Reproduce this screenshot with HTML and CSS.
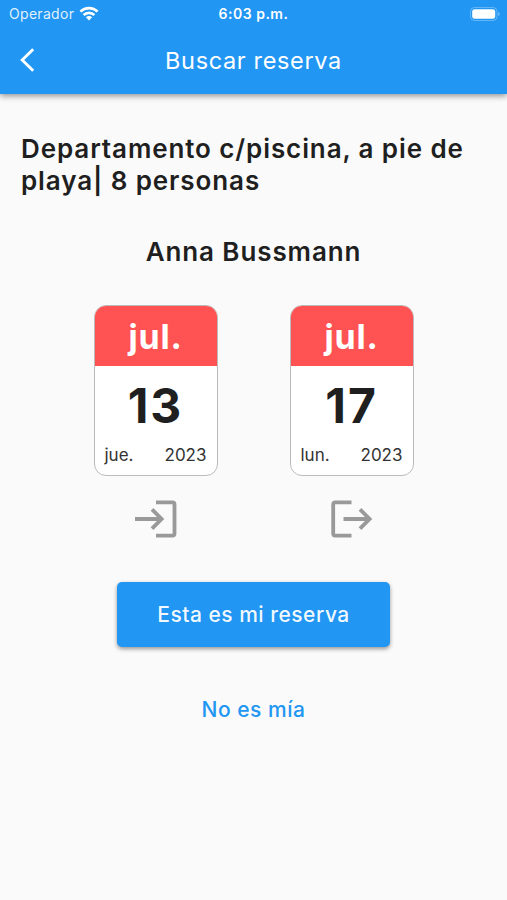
FILE: index.html
```html
<!DOCTYPE html>
<html lang="es">
<head>
  <meta charset="UTF-8" />
  <meta name="viewport" content="width=device-width, initial-scale=1.0" />
  <title>Buscar reserva</title>
  <link rel="stylesheet" href="styles.css">
</head>
<body>
  <header>
    <div class="status-bar">
      <div class="carrier">
        <span>Operador</span>
        <svg width="20" height="15" viewBox="0 0 20 15" fill="none" stroke="white" stroke-width="2.6">
          <path d="M1.4 5.6a12.4 12.4 0 0 1 17.2 0" />
          <path d="M4.6 9a7.8 7.8 0 0 1 10.8 0" />
          <path d="M10 14.4L6.9 11.3a4.4 4.4 0 0 1 6.2 0z" fill="white" stroke="none" />
        </svg>
      </div>
      <div class="time">6:03 p.m.</div>
      <svg class="battery" width="31" height="14" viewBox="0 0 31 14">
        <rect x="0.5" y="0.5" width="26.5" height="13" rx="4" fill="none" stroke="white" stroke-opacity="0.3" />
        <rect x="2.2" y="2.2" width="23" height="9.6" rx="2.4" fill="white" />
        <path d="M28.4 5v4a2.3 2.3 0 0 0 0-4z" fill="white" fill-opacity="0.5" />
      </svg>
    </div>
    <div class="app-bar">
      <a href="#" class="back" aria-label="Volver">
        <svg width="15" height="24" viewBox="0 0 15 24" fill="none" stroke="white" stroke-width="2.9">
          <path d="M13.2 1.2L2.2 12l11 10.8" />
        </svg>
      </a>
      <h1>Buscar reserva</h1>
    </div>
  </header>

  <main>
    <h2 class="property">Departamento c/piscina, a pie de playa| 8 personas</h2>
    <div class="guest">Anna Bussmann</div>

    <section class="dates">
      <div class="date">
        <div class="calendar">
          <div class="month">jul.</div>
          <div class="day">13</div>
          <div class="calendar-footer"><span>jue.</span><span>2023</span></div>
        </div>
        <svg width="42" height="38" viewBox="0 0 42 38" fill="none" stroke="#999" stroke-width="3.8">
          <path d="M0 19h27M17 9.4L26.6 19 17 28.6" />
          <path d="M21 2.4h16.5q2 0 2 2v29.2q0 2-2 2H21" />
        </svg>
      </div>
      <div class="date">
        <div class="calendar">
          <div class="month">jul.</div>
          <div class="day">17</div>
          <div class="calendar-footer"><span>lun.</span><span>2023</span></div>
        </div>
        <svg width="42" height="38" viewBox="0 0 42 38" fill="none" stroke="#999" stroke-width="3.8">
          <path d="M12.5 19h26.5M29 9.4L38.6 19 29 28.6" />
          <path d="M20.5 2.4H4.2q-2 0-2 2v29.2q0 2 2 2h16.3" />
        </svg>
      </div>
    </section>

    <button class="confirm">Esta es mi reserva</button>
    <button class="reject">No es mía</button>
  </main>
</body>
</html>
```

FILE: styles.css
```css
* {
  box-sizing: border-box;
}
body {
  font-family: Inter, "Liberation Sans", sans-serif;
  margin: 0;
  min-height: 100vh;
  background: #fafafa;
  color: #1f1f1f;
}
header {
  height: 94px;
  background: #2196f3;
  color: white;
  box-shadow: 0 2px 6px rgba(0,0,0,0.42);
}
.status-bar {
  display: grid;
  grid-template-columns: 1fr auto 1fr;
  align-items: center;
  height: 27px;
  padding: 0 6px 0 9px;
  font-size: 14px;
}
.carrier {
  display: flex;
  align-items: center;
  gap: 5px;
  color: rgba(255,255,255,0.88);
  letter-spacing: 0.3px;
}
.time {
  margin-left: -3px;
  font-weight: 600;
  letter-spacing: 0.5px;
}
.battery {
  justify-self: end;
}
.app-bar {
  display: grid;
  grid-template-columns: 50px 1fr 50px;
  align-items: center;
  height: 66px;
}
.back {
  display: flex;
  padding-left: 20px;
}
h1 {
  margin: 0;
  text-align: center;
  font-size: 23.5px;
  font-weight: 400;
  letter-spacing: 0.65px;
}
main {
  display: flex;
  flex-direction: column;
  align-items: center;
  padding: 39px 21px 0;
}
.property {
  width: 100%;
  margin: 0;
  font-size: 26px;
  font-weight: 600;
  line-height: 32px;
  letter-spacing: 0.9px;
}
.guest {
  margin-top: 39px;
  font-size: 26px;
  font-weight: 600;
  line-height: 32px;
  letter-spacing: 0.9px;
}
.dates {
  display: flex;
  gap: 72px;
  margin-top: 37px;
}
.date {
  display: flex;
  flex-direction: column;
  align-items: center;
  gap: 24px;
}
.calendar {
  width: 124px;
  height: 171px;
  border: 1px solid #bbb;
  border-radius: 12px;
  background: white;
  overflow: hidden;
}
.month {
  height: 60px;
  background: #ff5252;
  color: white;
  text-align: center;
  font-size: 34px;
  font-weight: 700;
  line-height: 62px;
  letter-spacing: 0.8px;
}
.day {
  height: 79px;
  text-align: center;
  font-size: 48px;
  font-weight: 700;
  line-height: 80px;
  letter-spacing: 2px;
}
.calendar-footer {
  display: flex;
  justify-content: space-between;
  padding: 0 10px;
  font-size: 17px;
  line-height: 21px;
  color: #333;
}
button {
  border: none;
  font-family: inherit;
  font-size: 21px;
  font-weight: 500;
  cursor: pointer;
}
.confirm {
  width: 273px;
  height: 65px;
  margin-top: 44px;
  border-radius: 5px;
  background: #2196f3;
  color: rgba(255,255,255,0.95);
  letter-spacing: 0.5px;
  box-shadow: 0 2px 4px rgba(0,0,0,0.4);
}
.reject {
  margin-top: 49px;
  background: none;
  color: #2196f3;
  letter-spacing: 0.5px;
}
```
